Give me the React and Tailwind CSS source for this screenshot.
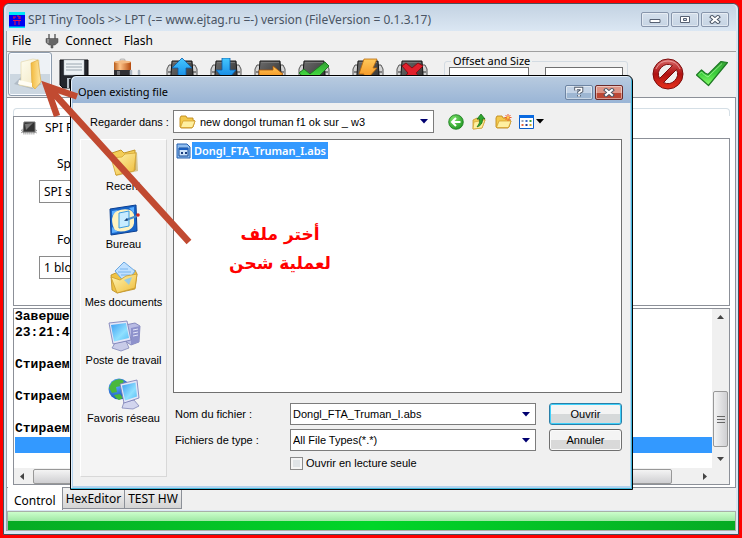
import React from "react";

const uiFont = "font-['Noto_Sans','Open_Sans',sans-serif]";

function Chip({ children }) {
  return (
    <svg width="32" height="32" viewBox="0 0 32 32" aria-hidden="true">
      <g fill="#d4d4d4" stroke="#555" strokeWidth="1">
        <path d="M6 7H3L1 11V28H5Z" />
        <path d="M26 7h3l2 4v17h-4Z" />
      </g>
      <path d="M2 14h3M2 18h3M2 22h3M27 14h3M27 18h3M27 22h3" stroke="#333" />
      <path d="M6 3H26L28 29H4Z" fill="url(#chipBody)" stroke="#181818" />
      <path d="M7 4.500H25" stroke="#777" />
      {children}
    </svg>
  );
}

function Defs() {
  return (
    <svg width="0" height="0" className="absolute" aria-hidden="true">
      <defs>
        <linearGradient id="chipBody" x1="0" y1="0" x2="1" y2="1">
          <stop offset="0" stopColor="#6d6d6d" />
          <stop offset="0.5" stopColor="#4b4b4b" />
          <stop offset="1" stopColor="#222" />
        </linearGradient>
        <linearGradient id="blueArrow" x1="0" y1="0" x2="0" y2="1">
          <stop offset="0" stopColor="#45c8ff" />
          <stop offset="1" stopColor="#0877dc" />
        </linearGradient>
        <linearGradient id="orange" x1="0" y1="0" x2="0" y2="1">
          <stop offset="0" stopColor="#ffc95a" />
          <stop offset="1" stopColor="#ef7d0a" />
        </linearGradient>
        <linearGradient id="green" x1="0" y1="0" x2="0" y2="1">
          <stop offset="0" stopColor="#35a035" />
          <stop offset="0.5" stopColor="#3ccf3c" />
          <stop offset="1" stopColor="#8dff6d" />
        </linearGradient>
        <linearGradient id="redFill" x1="0" y1="0" x2="0" y2="1">
          <stop offset="0" stopColor="#d96b6b" />
          <stop offset="0.5" stopColor="#b01212" />
          <stop offset="1" stopColor="#e8321c" />
        </linearGradient>
        <linearGradient id="copper" x1="0" y1="0" x2="1" y2="0">
          <stop offset="0" stopColor="#b65a18" />
          <stop offset="0.35" stopColor="#ffc58a" />
          <stop offset="1" stopColor="#b4480c" />
        </linearGradient>
        <linearGradient id="yellow" x1="0" y1="0" x2="1" y2="1">
          <stop offset="0" stopColor="#fff6b4" />
          <stop offset="1" stopColor="#efbc3a" />
        </linearGradient>
        <linearGradient id="gold" x1="0" y1="0" x2="1" y2="0">
          <stop offset="0" stopColor="#f2b93c" />
          <stop offset="1" stopColor="#ffe9a8" />
        </linearGradient>
        <linearGradient id="paper" x1="0" y1="0" x2="1" y2="1">
          <stop offset="0" stopColor="#fffef2" />
          <stop offset="1" stopColor="#f0e6c0" />
        </linearGradient>
        <linearGradient id="screen" x1="0" y1="0" x2="1" y2="1">
          <stop offset="0" stopColor="#3c9df2" />
          <stop offset="0.6" stopColor="#8fe0ff" />
          <stop offset="1" stopColor="#58bdf5" />
        </linearGradient>
        <radialGradient id="ball" cx="0.35" cy="0.3" r="0.8">
          <stop offset="0" stopColor="#7be06a" />
          <stop offset="1" stopColor="#1d9420" />
        </radialGradient>
        <radialGradient id="globe" cx="0.35" cy="0.3" r="0.8">
          <stop offset="0" stopColor="#5fb4ff" />
          <stop offset="1" stopColor="#0d47b5" />
        </radialGradient>
      </defs>
    </svg>
  );
}

function ToolButton({ label, active, children }) {
  return (
    <button
      aria-label={label}
      className={
        active
          ? "flex h-11 w-11 shrink-0 items-center justify-center rounded-[3px] border border-[#8d9cad] bg-linear-to-b from-[#eef2f6] from-50% to-[#ccd7e1] to-50% shadow-[inset_0_0_0_1px_#f8fbff]"
          : "flex h-11 w-11 shrink-0 items-center justify-center"
      }
    >
      {children}
    </button>
  );
}

function Separator() {
  return (
    <div className="flex w-[10px] shrink-0 justify-center py-1">
      <div className="w-px bg-[#e0e6ec]" />
    </div>
  );
}

function OpenFolder() {
  return (
    <svg width="32" height="34" viewBox="0 0 32 34" aria-hidden="true">
      <path d="M0 27 8 19l20 8-10 5Z" fill="#8e9aa6" opacity="0.45" />
      <path d="M7 5 19 2l6 1v24l-4 4-16-3 2-5Z" fill="url(#paper)" stroke="#e0d3a2" strokeWidth="0.600" />
      <path d="M17 6 24 3l3 22-6 7-3-3Z" fill="url(#gold)" stroke="#dba534" strokeWidth="0.600" />
      <path d="M5 23l-1 4 14 3V26Z" fill="#fffdf4" />
    </svg>
  );
}

function Floppy() {
  return (
    <svg width="32" height="32" viewBox="0 0 32 32" aria-hidden="true">
      <path d="M2 2H30V30H5L2 27Z" fill="#24262c" stroke="#0d0d10" />
      <path d="M6 2H26V17H6Z" fill="#eef2f5" stroke="#aab4bc" strokeWidth="0.500" />
      <path d="M8 6H24M8 9H24M8 12H24" stroke="#9aa6b0" />
      <path d="M9 20H24V30H9Z" fill="#b6bec6" />
      <path d="M11 21h5v9h-5Z" fill="#2a2c33" />
    </svg>
  );
}

function Battery() {
  return (
    <svg width="32" height="32" viewBox="0 0 32 32" aria-hidden="true">
      <rect x="8" y="1" width="5" height="3" rx="1" fill="#dcdcdc" stroke="#888" strokeWidth="0.500" />
      <path d="M2 4Q10 1 19 4V13H2Z" fill="url(#copper)" />
      <ellipse cx="10.500" cy="4" rx="8.500" ry="1.500" fill="#f4bb84" />
      <path d="M2 12H19V29Q10 32 2 29Z" fill="#303034" />
      <path d="M5 13H8V29H5Z" fill="#76767a" />
      <path d="M19 13v7M27 13v7" stroke="#aab4bf" strokeWidth="2.500" strokeLinecap="round" />
      <path d="M15 19h16v5l-4 4h-8l-4-4Z" fill="#70777f" />
    </svg>
  );
}

function Check() {
  return (
    <svg width="34" height="30" viewBox="0 0 34 30" aria-hidden="true">
      <path
        d="M1.500 16 6.500 11 10 14 13 15.500 26 2.500 32.500 3.500 13.500 26.500Z"
        fill="url(#green)"
        stroke="#1f7a24"
        strokeWidth="1.200"
        strokeLinejoin="round"
      />
      <path d="M4 15.500 6.500 13 9.500 16 13 18 27 4.500" fill="none" stroke="#a6f39a" strokeWidth="1" opacity="0.8" />
    </svg>
  );
}

function Forbidden() {
  return (
    <svg width="32" height="32" viewBox="0 0 32 32" aria-hidden="true">
      <path
        fillRule="evenodd"
        d="M16 1a15 15 0 1 1 0 30a15 15 0 0 1 0-30ZM7.500 20.500 20.500 7.500A9.700 9.700 0 0 0 7.500 20.500ZM11.500 24.500A9.700 9.700 0 0 0 24.500 11.500Z"
        fill="url(#redFill)"
        stroke="#7c0b0b"
        strokeWidth="1"
      />
      <path d="M4 11A13 13 0 0 1 28 11" fill="none" stroke="#f2b3b3" strokeWidth="1" opacity="0.700" />
    </svg>
  );
}

function CaptionButton({ label, danger, dialog, children }) {
  let look = "border-[#8795ab] bg-linear-to-b from-[#d4dfeb] to-[#c6d4e4]";
  if (dialog) look = "border-[#6e85a3] bg-linear-to-b from-[#c3d3e6] from-50% to-[#9db6d2] to-50%";
  if (danger) look = "border-[#6b2a2a] bg-linear-to-b from-[#dd9587] from-50% to-[#bb4735] to-50%";
  return (
    <button
      aria-label={label}
      className={"flex h-[15px] w-7 items-center justify-center rounded-[2px] border shadow-[inset_0_0_0_1px_rgba(255,255,255,0.45)] " + look}
    >
      {children}
    </button>
  );
}

function CloseGlyph() {
  return (
    <svg width="12" height="9" viewBox="0 0 12 9" aria-hidden="true">
      <path d="M3 2l6 5M9 2l-6 5" stroke="#4b5565" strokeWidth="4" strokeLinecap="square" />
      <path d="M3 2l6 5M9 2l-6 5" stroke="#fff" strokeWidth="2" strokeLinecap="square" />
    </svg>
  );
}

function TitleBar() {
  return (
    <header className="flex h-[27px] shrink-0 items-center gap-[3px] rounded-t-[5px] bg-linear-to-b from-[#c3d2e2] to-[#dbe7f3] pt-1 pr-[7px] pl-[3px]">
      <svg width="16" height="16" viewBox="0 0 16 16" aria-hidden="true">
        <path d="M0 0H16V16H0Z" fill="#0000f0" />
        <path d="M0 0H16V3H0ZM0 14.500H16V16H0Z" fill="#00e4f4" />
        <path d="M4 5h3M5 5v2M8 4h2v3M11 4v3M4 8.500h8M6 9v4M10 9v4" stroke="#e8104a" fill="none" />
      </svg>
      <h1 className="flex-1 truncate text-[12px] leading-4 text-[#4a5564]">
        SPI Tiny Tools &gt;&gt; LPT (-= www.ejtag.ru =-) version (FileVersion = 0.1.3.17)
      </h1>
      <div className="flex gap-0.5">
        <CaptionButton label="Minimize">
          <svg width="12" height="9" viewBox="0 0 12 9" aria-hidden="true">
            <path d="M1 4.500h10v3H1Z" fill="#fff" stroke="#566072" />
          </svg>
        </CaptionButton>
        <CaptionButton label="Maximize">
          <svg width="12" height="9" viewBox="0 0 12 9" aria-hidden="true">
            <path d="M1.500 1.500h9v6h-9Z" fill="#fff" stroke="#566072" />
            <path d="M4.500 3.500h3v2h-3Z" fill="#cdd9e7" stroke="#566072" />
          </svg>
        </CaptionButton>
        <CaptionButton label="Close">
          <CloseGlyph />
        </CaptionButton>
      </div>
    </header>
  );
}

function MenuBar() {
  return (
    <nav className="flex h-[21px] shrink-0 items-center border-b border-[#a0a0a0] bg-[#f0f0f0] px-[5px] text-[12px] leading-4 text-black">
      <button className="mr-3.5">File</button>
      <button className="mr-3 flex items-center gap-1.5">
        <svg width="14" height="16" viewBox="0 0 14 16" aria-hidden="true">
          <path d="M4 1v5M10 1v5" stroke="#888" strokeWidth="2" />
          <path d="M1 5.500h12v4L10 12H8v3H6v-3H4L1 9.500Z" fill="#666" stroke="#444" strokeWidth="0.500" />
          <path d="M3 6v4" stroke="#bbb" />
        </svg>
        Connect
      </button>
      <button>Flash</button>
    </nav>
  );
}

function Toolbar() {
  return (
    <div className="flex h-[45px] shrink-0 items-start bg-[#f0f0f0] pr-0.5 pl-px">
      <ToolButton label="Open" active>
        <OpenFolder />
      </ToolButton>
      <ToolButton label="Save">
        <Floppy />
      </ToolButton>
      <Separator />
      <ToolButton label="Power">
        <Battery />
      </ToolButton>
      <Separator />
      <ToolButton label="Read chip">
        <Chip>
          <path d="M16 0 26 10H20V26H12V10H6Z" fill="url(#blueArrow)" stroke="#0b5aa8" strokeWidth="0.800" />
        </Chip>
      </ToolButton>
      <ToolButton label="Write chip">
        <Chip>
          <path d="M12 0H20V12H26L16 24 6 12H12Z" fill="url(#blueArrow)" stroke="#0b5aa8" strokeWidth="0.800" />
        </Chip>
      </ToolButton>
      <ToolButton label="Move">
        <Chip>
          <path d="M5 12H19V8L29 16 19 24V20H5Z" fill="url(#orange)" stroke="#a8560a" strokeWidth="0.800" />
        </Chip>
      </ToolButton>
      <ToolButton label="Verify chip">
        <Chip>
          <path d="M1 15 6 11 12 16 27 4 31 8 13 26Z" fill="url(#green)" stroke="#1f7a24" />
        </Chip>
      </ToolButton>
      <Separator />
      <ToolButton label="Program">
        <Chip>
          <path d="M12 1H25L21 10H25L9 28 12 16H7Z" fill="url(#orange)" stroke="#b8690c" strokeWidth="0.800" />
        </Chip>
      </ToolButton>
      <ToolButton label="Erase chip">
        <Chip>
          <path d="M6 8 10 5 16 10 22 5 27 8 20 15 26 22 22 26 16 20 10 26 6 22 12 15Z" fill="#e0202c" stroke="#8a0d14" />
        </Chip>
      </ToolButton>
      <Separator />
      <fieldset className="mt-px h-11 min-w-0 max-w-[184px] flex-1 rounded-[3px] border border-[#d3dbe2] px-1 text-[11px]">
        <legend className="ml-0.5 px-0.5 leading-4">Offset and Size</legend>
        <div className="-mt-0.5 flex gap-4">
          <input aria-label="Offset" defaultValue="00000000" className="h-6 w-[80px] border border-[#707070] bg-white px-1" />
          <input aria-label="Size" defaultValue="Chip" className="h-6 w-[78px] border border-[#707070] bg-white px-1" />
        </div>
      </fieldset>
      <div className="ml-auto flex">
        <ToolButton label="Cancel">
          <Forbidden />
        </ToolButton>
        <ToolButton label="Accept">
          <Check />
        </ToolButton>
      </div>
    </div>
  );
}

function LeftField({ id, label, value }) {
  return (
    <div className="flex flex-col">
      <label htmlFor={id} className="pl-[18px] leading-4">
        {label}
      </label>
      <select id={id} className="mt-2 h-[23px] w-[160px] appearance-none border border-[#8a8a8a] bg-white px-1 leading-4">
        <option>{value}</option>
      </select>
    </div>
  );
}

const log = ["Завершено", "23:21:45", "", "Стираем", "", "Стираем", "", "Стираем"];

function Scroller({ vertical }) {
  const arrow = (d) => (
    <span className="flex h-4 w-4 shrink-0 items-center justify-center">
      <svg width="7" height="7" viewBox="0 0 7 7" aria-hidden="true">
        <path d={d} fill="#444" />
      </svg>
    </span>
  );
  if (vertical) {
    return (
      <div className="flex w-[17px] shrink-0 flex-col items-center bg-[#f0f0f0] pb-[18px]">
        {arrow("M0 5H7L3.500 1Z")}
        <div className="flex-1" />
        <div className="mb-[3px] flex h-[56px] w-[15px] flex-col items-center justify-center gap-0.5 rounded-[2px] border border-[#989898] bg-linear-to-r from-[#f4f4f4] to-[#cfcfd2]">
          <span className="h-px w-2 bg-[#666]" />
          <span className="h-px w-2 bg-[#666]" />
          <span className="h-px w-2 bg-[#666]" />
        </div>
        {arrow("M0 2H7L3.500 6Z")}
      </div>
    );
  }
  return (
    <div className="flex h-4 shrink-0 items-center bg-[#f0f0f0]">
      {arrow("M5 0V7L1 3.500Z")}
      <div className="mr-6 ml-[3px] h-[15px] flex-1 rounded-[2px] border border-[#989898] bg-linear-to-b from-[#f4f4f4] to-[#cfcfd2]" />
      {arrow("M2 0V7L6 3.500Z")}
    </div>
  );
}

function ControlPage() {
  return (
    <main className="flex min-h-0 flex-1 flex-col border-t border-r border-b border-[#8c9098] bg-white pt-2.5 pr-[5px] pb-0.5 pl-1.5">
      <div className="h-2 shrink-0 rounded-t-[4px] border-x border-t border-[#d5dfe6]" />
      <section className="flex h-[190px] shrink-0 flex-col border-b border-l border-[#8c9098] text-[12px]">
        <div className="flex h-[23px] shrink-0">
          <div className="flex w-[120px] items-center gap-2 border-t border-r border-[#8c9098] pl-[7px]">
            <svg width="16" height="14" viewBox="0 0 16 14" aria-hidden="true">
              <path d="M0 9 2 12H14L16 9" fill="none" stroke="#999" strokeWidth="3" strokeDasharray="1 1" />
              <path d="M3 1H14V11H2Z" fill="#333" stroke="#777" />
              <path d="M4 3 12 2 5 9Z" fill="#777" />
            </svg>
            SPI Flash
          </div>
          <div className="flex-1 border-b border-[#8c9098]" />
        </div>
        <div className="flex flex-1 flex-col gap-[29px] border-r border-[#8c9098] pt-[17px] pl-[25px]">
          <LeftField id="spi-type" label="Speed" value="SPI st" />
          <LeftField id="format" label="Format" value="1 block" />
        </div>
      </section>
      <section className="mt-0.5 flex min-h-0 flex-1 border border-[#8c9098]">
        <div className="flex min-w-0 flex-1 flex-col">
          <div className="min-h-0 flex-1 overflow-hidden pl-px font-['Liberation_Mono',monospace] text-[13px] leading-4 font-bold text-black">
            {log.map((line, i) => (
              <p key={i} className="h-4">
                {line}
              </p>
            ))}
            <div className="h-4 bg-[#3399ff]" />
          </div>
          <Scroller />
        </div>
        <Scroller vertical />
      </section>
    </main>
  );
}

function Tabs() {
  return (
    <div className="flex h-[22px] shrink-0 items-start bg-[#f0f0f0] pl-px text-[12px] leading-4">
      <button className="-mt-px h-[23px] border-r border-[#8c9098] bg-white px-1.5 pt-1">Control</button>
      <button className="mt-px h-5 border-r border-b border-[#8c9098] bg-linear-to-b from-[#f2f2f2] to-[#d4d4d4] px-[3px]">HexEditor</button>
      <button className="mt-px h-5 border-r border-b border-[#8c9098] bg-linear-to-b from-[#f2f2f2] to-[#d4d4d4] px-[3px]">TEST HW</button>
    </div>
  );
}

function SmallFolder({ children }) {
  return (
    <svg width="17" height="16" viewBox="0 0 17 16" aria-hidden="true">
      <path d="M1 4 2 2H7L8 4H14V6L16 7 14 13 13 14H2L1 13Z" fill="#f3c94c" stroke="#c08a1c" strokeWidth="0.900" />
      <path d="M4 7H16L13.500 13.500H1.500Z" fill="#fff0a0" stroke="#d09a28" strokeWidth="0.700" />
      {children}
    </svg>
  );
}

function LargeFolder() {
  return (
    <svg width="32" height="32" viewBox="0 0 32 32" aria-hidden="true">
      <path d="M5 8 15 6 17 9 29 6 30 25 8 30Z" fill="#b8962f" opacity="0.500" />
      <path d="M4 7 13 4 16 7 27 4V24L8 29Z" fill="#f3cd56" stroke="#c2952a" />
      <path d="M3 12 14 11 17 8 28 7 26 25 8 29Z" fill="url(#yellow)" stroke="#d4a434" strokeWidth="0.800" />
    </svg>
  );
}

function Desktop() {
  return (
    <svg width="32" height="32" viewBox="0 0 32 32" aria-hidden="true">
      <path d="M2 5 28 1 29 27 3 31Z" fill="#1764c8" stroke="#0b3f91" />
      <path d="M4 7 10 6 4 12ZM21 4 26 3V9ZM4 23v6l6-1Z" fill="#5fb0ff" />
      <path d="M9 7Q16 4 22 6Q27 8 26 16Q27 23 21 26Q12 29 7 26Q4 22 4 15Q5 9 9 7Z" fill="#fff3c0" />
      <path d="M11 9 21 7V22L11 24Z" fill="#c7ecff" stroke="#3b9be0" />
      <path d="M18 16 29 12" stroke="#4a8cc8" strokeWidth="2" />
      <circle cx="30" cy="11" r="1.800" fill="#d02a20" />
      <path d="M16 17 19 14 20 16.500Z" fill="#123c70" />
    </svg>
  );
}

function Documents() {
  return (
    <svg width="32" height="32" viewBox="0 0 32 32" aria-hidden="true">
      <path d="M3 13 10 10 14 12 27 8 29 12 27 27 9 31 4 28Z" fill="#efc243" stroke="#b98a1e" strokeWidth="0.800" />
      <path d="M7 9 16 0 27 9 18 22Z" fill="#bfe0ff" stroke="#6ba7e0" />
      <path d="M12 7h8M10 10h13M13 13h9M15 16h5" stroke="#78b4ee" />
      <path d="M3 15 12 18 18 14 29 12 27 26 9 31Z" fill="url(#yellow)" stroke="#c99b2c" strokeWidth="0.800" />
      <path d="M16 18l8-3-3 8Z" fill="#8cc9f2" opacity="0.900" />
    </svg>
  );
}

function Computer() {
  return (
    <svg width="34" height="32" viewBox="0 0 34 32" aria-hidden="true">
      <path d="M18 5 28 3 33 6 32 22 24 25 18 21Z" fill="#b9bce4" stroke="#7579b4" strokeWidth="0.800" />
      <path d="M24 8 33 6 32 22 24 25Z" fill="#8e92cc" />
      <path d="M26 10l5-1M26 13l5-1M26 16l5-1" stroke="#e4e6fa" />
      <path d="M8 23 19 21 22 28 14 31 5 28Z" fill="#c8cbe8" stroke="#8286b8" strokeWidth="0.800" />
      <path d="M2 3 20 1 24 20 6 24Z" fill="#e4e6f7" stroke="#7579b4" strokeWidth="0.800" />
      <path d="M4 5 19 3 22 18 7 21.500Z" fill="url(#screen)" />
    </svg>
  );
}

function Network() {
  return (
    <svg width="34" height="32" viewBox="0 0 34 32" aria-hidden="true">
      <circle cx="12" cy="11" r="10.500" fill="url(#globe)" />
      <path d="M5 4Q12-1 17 3L14 8 9 9 10 14 5 15 2 10ZM7 17l6-1 3 4-4 2Q8 20 7 17Z" fill="#49b83c" />
      <path d="M17 24 27 22 32 28 26 31 15 30Z" fill="#d2d5ee" stroke="#8286b8" strokeWidth="0.800" />
      <path d="M13 6 30 2 32 20 17 25Z" fill="#e4e6f7" stroke="#7579b4" strokeWidth="0.800" />
      <path d="M15 7.500 28.500 4.500 30 18.500 18 22.500Z" fill="url(#screen)" />
    </svg>
  );
}

const places = [
  ["Recent", LargeFolder],
  ["Bureau", Desktop],
  ["Mes documents", Documents],
  ["Poste de travail", Computer],
  ["Favoris réseau", Network],
];

function Caret({ color = "#000070" }) {
  return (
    <svg width="8" height="5" viewBox="0 0 8 5" className="shrink-0" aria-hidden="true">
      <path d="M0 0H8L4 4.500Z" fill={color} />
    </svg>
  );
}

function ComboFrame({ children }) {
  return <div className="flex h-[22px] min-w-0 flex-1 items-center border border-[#7c7c7c] bg-white pr-[5px]">{children}</div>;
}

function OpenDialog() {
  return (
    <section
      role="dialog"
      aria-labelledby="dialog-title"
      className="absolute top-[75px] right-[109px] left-[70px] flex flex-col rounded-t-[6px] border border-black bg-[#b4d3ee] px-[2px] pb-[3px] text-[11px] leading-4 text-black shadow-[inset_-1px_-1px_0_#42b8dc,inset_1px_1px_0_#e6f0fa]"
    >
      <header className="-mx-px mt-px flex h-[26px] items-center justify-between rounded-t-[5px] bg-linear-to-b from-[#b7cadf] to-[#9ab5d6] pt-1 pr-2 pl-1.5">
        <h2 id="dialog-title" className={"text-[11px] leading-4 " + uiFont}>
          Open existing file
        </h2>
        <div className="flex gap-0.5">
          <CaptionButton label="Help" dialog>
            <svg width="12" height="12" viewBox="0 0 12 12" aria-hidden="true">
              <path d="M3 4.500V2.500H8.500V5L6 6.500V7.500M6 9v1.500" fill="none" stroke="#4b5565" strokeWidth="3.500" />
              <path d="M3 4.500V2.500H8.500V5L6 6.500V7.500M6 9v1.500" fill="none" stroke="#fff" strokeWidth="1.700" />
            </svg>
          </CaptionButton>
          <CaptionButton label="Close dialog" danger>
            <CloseGlyph />
          </CaptionButton>
        </div>
      </header>
      <div className="bg-[#f0f0f0] pt-[7px] pr-2 pb-[9px] pl-[7px] font-['Liberation_Sans',Arial,sans-serif]">
        <div className="flex items-center">
          <label htmlFor="folder" className="w-[93px] shrink-0 pl-2.5">
            Regarder dans :
          </label>
          <div className="flex h-[23px] max-w-[261px] min-w-0 flex-1 items-center border border-[#7c7c7c] bg-white pr-[5px] pl-[5px]">
            <SmallFolder />
            <select id="folder" className="h-5 min-w-0 flex-1 appearance-none bg-transparent pl-1">
              <option>new dongol truman f1 ok sur _ w3</option>
            </select>
            <Caret />
          </div>
          <div className="ml-3.5 flex items-center gap-[7px]">
            <button aria-label="Back">
              <svg width="16" height="16" viewBox="0 0 16 16" aria-hidden="true">
                <circle cx="8" cy="8" r="7.300" fill="url(#ball)" stroke="#177a1a" strokeWidth="0.800" />
                <path d="M12.500 8H4.500M8 4 4 8l4 4" fill="none" stroke="#fff" strokeWidth="2" />
              </svg>
            </button>
            <button aria-label="Up one level">
              <svg width="17" height="16" viewBox="0 0 17 16" aria-hidden="true">
                <path d="M2 6 6 4 7 6 13 4 14 6 11 14 2 15Z" fill="#f3cd56" stroke="#c2952a" strokeWidth="0.800" />
                <path d="M3 8 14 6 11 14 2 15Z" fill="#fff0a0" stroke="#d4a434" strokeWidth="0.700" />
                <path d="M10 0 14 5H11.500Q12 11 6 13 9.500 9 8.500 5H6Z" fill="#2fa52f" stroke="#116a15" strokeWidth="0.700" />
              </svg>
            </button>
            <button aria-label="New folder">
              <SmallFolder>
                <path d="M13 0v7M9.500 3.500h7M10.500 1l5 5M15.500 1l-5 5" stroke="#f05a28" />
                <circle cx="13" cy="3.500" r="1.300" fill="#ffd04a" />
              </SmallFolder>
            </button>
            <button aria-label="View" className="flex items-center gap-0.5">
              <svg width="15" height="14" viewBox="0 0 15 14" aria-hidden="true">
                <path d="M0.500 0.500H14.500V13.500H0.500Z" fill="#fff" stroke="#0a5cc8" />
                <path d="M0 0H15V3H0Z" fill="#0a6ae0" />
                <path d="M2.500 5h2v2h-2Z" fill="#9aa3b4" />
                <path d="M6.500 5h2v2h-2Z" fill="#3a67c8" />
                <path d="M10.500 5h2v2h-2Z" fill="#3aa03a" />
                <path d="M2.500 9h2v2h-2Z" fill="#e8643a" />
                <path d="M6.500 9h2v2h-2Z" fill="#203c94" />
                <path d="M10.500 9h2v2h-2Z" fill="#d0a820" />
              </svg>
              <Caret color="#000" />
            </button>
          </div>
        </div>

        <div className="mt-1.5 flex gap-1.5">
          <aside className="flex w-[87px] shrink-0 flex-col gap-2 border border-t-white border-r-[#d8d8d8] border-b-[#d8d8d8] border-l-white bg-[#f4f4f4] pt-1.5">
            {places.map(([name, Icon]) => (
              <button key={name} className="flex h-[50px] flex-col items-center whitespace-nowrap">
                <Icon />
                <span>{name}</span>
              </button>
            ))}
          </aside>

          <div className="flex min-w-0 flex-1 flex-col pb-1.5">
            <div className="h-[254px] border border-[#707070] bg-white p-0.5">
              <div className="flex items-center gap-px">
                <svg width="15" height="16" viewBox="0 0 15 16" aria-hidden="true">
                  <path d="M1 1H11L14 4V15H1Z" fill="#8fbdf0" stroke="#225fae" />
                  <path d="M3 5H12V13H3Z" fill="#cfe4fa" stroke="#174a94" />
                  <path d="M3 5H12V7H3Z" fill="#1b5fc0" />
                  <path d="M5 10h2M9 10h2" stroke="#1b3f80" strokeWidth="2" />
                </svg>
                <span className={"bg-[#3399ff] px-0.5 text-[11px] leading-[17px] font-semibold text-white " + uiFont}>
                  Dongl_FTA_Truman_I.abs
                </span>
              </div>
              <p
                dir="rtl"
                lang="ar"
                className="mt-[61px] ml-[44px] w-[120px] text-center font-['DejaVu_Sans',sans-serif] text-[17px] leading-[29px] font-bold whitespace-nowrap text-[#ff0000]"
              >
                أختر ملف
                <br />
                لعملية شحن
              </p>
            </div>

            <div className="mt-2.5 flex items-center gap-[13px]">
              <div className="flex min-w-0 flex-1 items-center">
                <label htmlFor="file-name" className="w-[117px] shrink-0 pl-0.5">
                  Nom du fichier :
                </label>
                <ComboFrame>
                  <input id="file-name" defaultValue="Dongl_FTA_Truman_I.abs" className="h-5 min-w-0 flex-1 bg-transparent px-0.5 outline-none" />
                  <Caret />
                </ComboFrame>
              </div>
              <button className="h-[22px] w-[73px] rounded-[3px] border border-[#2a7fa8] bg-linear-to-b from-[#f4f4f4] from-50% to-[#d6d9da] to-50% shadow-[inset_0_0_0_1px_#3fd0fa]">
                Ouvrir
              </button>
            </div>
            <div className="mt-1 flex items-center gap-[13px]">
              <div className="flex min-w-0 flex-1 items-center">
                <label htmlFor="file-type" className="w-[117px] shrink-0 pl-0.5">
                  Fichiers de type :
                </label>
                <ComboFrame>
                  <select id="file-type" className="h-5 min-w-0 flex-1 appearance-none bg-transparent px-0.5">
                    <option>All File Types(*.*)</option>
                  </select>
                  <Caret />
                </ComboFrame>
              </div>
              <button className="h-[22px] w-[73px] rounded-[3px] border border-[#707070] bg-linear-to-b from-[#f4f4f4] from-50% to-[#d9d9d9] to-50% shadow-[inset_0_0_0_1px_#fafafa]">
                Annuler
              </button>
            </div>
            <label className="mt-1 ml-[117px] flex items-center gap-[3px]">
              <input
                type="checkbox"
                className="h-[13px] w-[13px] appearance-none border border-[#8a8a8a] bg-[#dfe3e6] shadow-[inset_0_0_0_2px_#f4f4f4]"
              />
              Ouvrir en lecture seule
            </label>
          </div>
        </div>
      </div>
    </section>
  );
}

export default function App() {
  return (
    <div className={"relative flex h-screen min-h-[538px] flex-col bg-[#ff0000] px-[3px] py-[3px] " + uiFont}>
      <Defs />
      <div className="flex min-h-0 flex-1 flex-col rounded-t-[6px] border border-[#46505c] bg-[#dbe7f3] px-[2px] pb-[3px]">
        <TitleBar />
        <div className="flex min-h-0 flex-1 flex-col border-l border-[#9aa4b0]">
          <MenuBar />
          <Toolbar />
          <ControlPage />
          <Tabs />
          <div
            role="progressbar"
            aria-valuenow={100}
            aria-label="Progress"
            className="mt-px flex h-5 shrink-0 flex-col border border-[#a8b0a8]"
          >
            <div className="flex-1 bg-linear-to-b from-[#ccffcc] to-[#9fe8a4]" />
            <div className="flex-1 bg-linear-to-r from-[#06ab24] via-[#00d628] to-[#06ab24]" />
          </div>
        </div>
      </div>

      <OpenDialog />

      <svg width="160" height="170" viewBox="0 0 160 170" className="pointer-events-none absolute top-[78px] left-[38px]" aria-hidden="true">
        <path d="M151 164 10 9M19 38 8.500 8 39 18.500" fill="none" stroke="#c14a31" strokeWidth="6.500" />
      </svg>
    </div>
  );
}
